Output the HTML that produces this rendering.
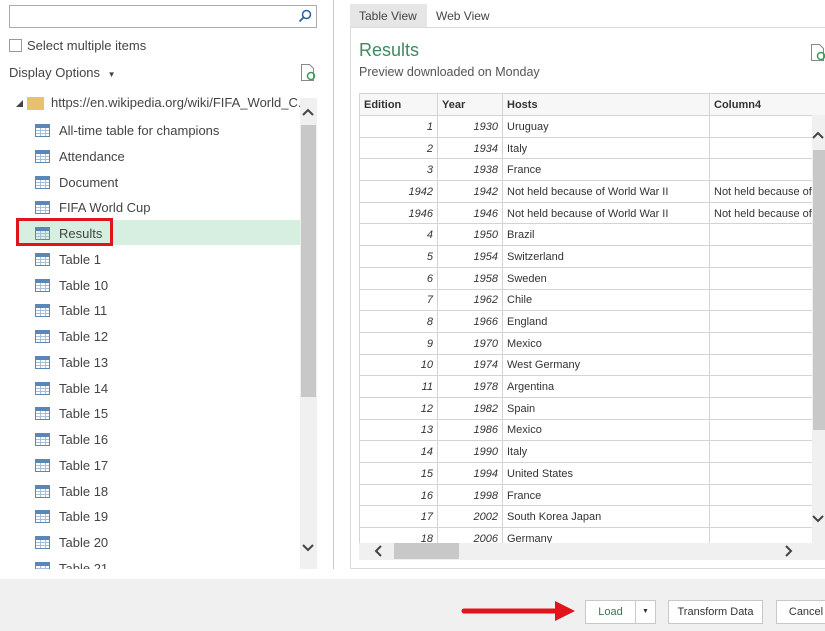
<!DOCTYPE html>
<html><head><style>
*{margin:0;padding:0;box-sizing:border-box}
body{width:825px;height:631px;overflow:hidden;background:#fff;font-family:"Liberation Sans",sans-serif;color:#444;position:relative}
.a{position:absolute}
.ic{position:absolute;width:15px;height:13px;border:1px solid #5a86b8;background:
linear-gradient(#5a86b8,#5a86b8) 0 0/100% 3px no-repeat,
repeating-linear-gradient(90deg,transparent 0 4px,#a9bfd8 4px 5px),
repeating-linear-gradient(0deg,transparent 0 2px,#a9bfd8 2px 3px);}
.it{position:absolute;left:59px;font-size:13px;color:#444}
table{border-collapse:collapse;font-size:11px;color:#333;table-layout:fixed}
td{border:1px solid #d4d4d4;height:21.7px;padding:1px 4px 0;white-space:nowrap;overflow:hidden}
td.n{text-align:right;font-style:italic}
th{border:1px solid #d4d4d4;height:22px;text-align:left;padding:0 4px;font-size:11px;background:#f7f7f7}
.btn{position:absolute;top:600px;height:24px;border:1px solid #c8c8c8;background:#fff;font-size:11px;color:#333;text-align:center;line-height:22px}
</style></head><body>
<div class="a" style="left:9px;top:5px;width:308px;height:23px;border:1px solid #ababab"></div>
<svg class="a" style="left:298px;top:9px" width="14" height="14"><circle cx="8.5" cy="5.5" r="4" fill="none" stroke="#2a5fa0" stroke-width="1.5"/><line x1="5.5" y1="8.5" x2="1.5" y2="12.5" stroke="#2a5fa0" stroke-width="1.8"/></svg>
<div class="a" style="left:9px;top:39px;width:13px;height:13px;border:1px solid #999"></div>
<div class="a" style="left:27px;top:38px;font-size:13px">Select multiple items</div>
<div class="a" style="left:9px;top:65px;font-size:13px">Display Options <span style="font-size:8px;margin-left:4px">▼</span></div>
<svg class="a" style="left:300px;top:64px" width="17" height="18"><path d="M1.5 .5h8l4 4v12h-12z" fill="#fff" stroke="#888"/><circle cx="11" cy="12" r="3.5" fill="none" stroke="#3a9a5a" stroke-width="1.5"/></svg>
<div class="a" style="left:16px;top:100px;width:0;height:0;border-left:7px solid transparent;border-bottom:7px solid #444"></div>
<div class="a" style="left:27px;top:97px;width:17px;height:13px;background:#e8c16e"></div>
<div class="a" style="left:51px;top:95px;font-size:13px">https://en.wikipedia.org/wiki/FIFA_World_C...</div>
<div class="a" style="left:16px;top:220px;width:284px;height:25px;background:#d6efe0"></div>
<div class="a" style="left:16px;top:218px;width:97px;height:28px;border:3px solid #e0141c"></div>
<div class="a" style="left:0;top:116px;width:300px;height:453px;overflow:hidden">
<div class="ic" style="left:35px;top:8px"></div><div class="it" style="top:7px">All-time table for champions</div>
<div class="ic" style="left:35px;top:34px"></div><div class="it" style="top:33px">Attendance</div>
<div class="ic" style="left:35px;top:60px"></div><div class="it" style="top:59px">Document</div>
<div class="ic" style="left:35px;top:85px"></div><div class="it" style="top:84px">FIFA World Cup</div>
<div class="ic" style="left:35px;top:111px"></div><div class="it" style="top:110px">Results</div>
<div class="ic" style="left:35px;top:137px"></div><div class="it" style="top:136px">Table 1</div>
<div class="ic" style="left:35px;top:163px"></div><div class="it" style="top:162px">Table 10</div>
<div class="ic" style="left:35px;top:188px"></div><div class="it" style="top:187px">Table 11</div>
<div class="ic" style="left:35px;top:214px"></div><div class="it" style="top:213px">Table 12</div>
<div class="ic" style="left:35px;top:240px"></div><div class="it" style="top:239px">Table 13</div>
<div class="ic" style="left:35px;top:266px"></div><div class="it" style="top:265px">Table 14</div>
<div class="ic" style="left:35px;top:291px"></div><div class="it" style="top:290px">Table 15</div>
<div class="ic" style="left:35px;top:317px"></div><div class="it" style="top:316px">Table 16</div>
<div class="ic" style="left:35px;top:343px"></div><div class="it" style="top:342px">Table 17</div>
<div class="ic" style="left:35px;top:369px"></div><div class="it" style="top:368px">Table 18</div>
<div class="ic" style="left:35px;top:394px"></div><div class="it" style="top:393px">Table 19</div>
<div class="ic" style="left:35px;top:420px"></div><div class="it" style="top:419px">Table 20</div>
<div class="ic" style="left:35px;top:446px"></div><div class="it" style="top:445px">Table 21</div>
</div>
<div class="a" style="left:300px;top:98px;width:17px;height:471px;background:#f0f0f0"></div>
<div class="a" style="left:301px;top:125px;width:15px;height:272px;background:#c8c8c8"></div>
<svg class="a" style="left:302px;top:108px" width="12" height="9"><path d="M1 7l5-5 5 5" fill="none" stroke="#444" stroke-width="2"/></svg>
<svg class="a" style="left:302px;top:543px" width="12" height="9"><path d="M1 2l5 5 5-5" fill="none" stroke="#444" stroke-width="2"/></svg>
<div class="a" style="left:333px;top:0;width:1px;height:569px;background:#c8c8c8"></div>
<div class="a" style="left:350px;top:4px;width:77px;height:23px;background:#e6e6e6"></div>
<div class="a" style="left:359px;top:9px;font-size:12px">Table View</div>
<div class="a" style="left:436px;top:9px;font-size:12px">Web View</div>
<div class="a" style="left:350px;top:27px;width:480px;height:542px;border:1px solid #dadada"></div>
<div class="a" style="left:359px;top:40px;font-size:18px;color:#3f8a5e">Results</div>
<div class="a" style="left:359px;top:65px;font-size:12.5px;color:#555">Preview downloaded on Monday</div>
<svg class="a" style="left:810px;top:44px" width="17" height="18"><path d="M1.5 .5h8l4 4v12h-12z" fill="#fff" stroke="#888"/><circle cx="11" cy="12" r="3.5" fill="none" stroke="#3a9a5a" stroke-width="1.5"/></svg>
<div class="a" style="left:359px;top:93px;width:466px;height:450px;overflow:hidden">
<table style="width:480px">
<colgroup><col style="width:78px"><col style="width:65px"><col style="width:207px"><col style="width:130px"></colgroup>
<tr><th>Edition</th><th>Year</th><th>Hosts</th><th>Column4</th></tr>
<tr><td class="n">1</td><td class="n">1930</td><td>Uruguay</td><td></td></tr>
<tr><td class="n">2</td><td class="n">1934</td><td>Italy</td><td></td></tr>
<tr><td class="n">3</td><td class="n">1938</td><td>France</td><td></td></tr>
<tr><td class="n">1942</td><td class="n">1942</td><td>Not held because of World War II</td><td>Not held because of</td></tr>
<tr><td class="n">1946</td><td class="n">1946</td><td>Not held because of World War II</td><td>Not held because of</td></tr>
<tr><td class="n">4</td><td class="n">1950</td><td>Brazil</td><td></td></tr>
<tr><td class="n">5</td><td class="n">1954</td><td>Switzerland</td><td></td></tr>
<tr><td class="n">6</td><td class="n">1958</td><td>Sweden</td><td></td></tr>
<tr><td class="n">7</td><td class="n">1962</td><td>Chile</td><td></td></tr>
<tr><td class="n">8</td><td class="n">1966</td><td>England</td><td></td></tr>
<tr><td class="n">9</td><td class="n">1970</td><td>Mexico</td><td></td></tr>
<tr><td class="n">10</td><td class="n">1974</td><td>West Germany</td><td></td></tr>
<tr><td class="n">11</td><td class="n">1978</td><td>Argentina</td><td></td></tr>
<tr><td class="n">12</td><td class="n">1982</td><td>Spain</td><td></td></tr>
<tr><td class="n">13</td><td class="n">1986</td><td>Mexico</td><td></td></tr>
<tr><td class="n">14</td><td class="n">1990</td><td>Italy</td><td></td></tr>
<tr><td class="n">15</td><td class="n">1994</td><td>United States</td><td></td></tr>
<tr><td class="n">16</td><td class="n">1998</td><td>France</td><td></td></tr>
<tr><td class="n">17</td><td class="n">2002</td><td>South Korea Japan</td><td></td></tr>
<tr><td class="n">18</td><td class="n">2006</td><td>Germany</td><td></td></tr>
</table></div>
<div class="a" style="left:812px;top:115px;width:13px;height:428px;background:#f0f0f0"></div>
<div class="a" style="left:813px;top:150px;width:12px;height:280px;background:#c8c8c8"></div>
<svg class="a" style="left:812px;top:131px" width="13" height="9"><path d="M1 7l5-5 5 5" fill="none" stroke="#444" stroke-width="2"/></svg>
<svg class="a" style="left:812px;top:514px" width="13" height="9"><path d="M1 2l5 5 5-5" fill="none" stroke="#444" stroke-width="2"/></svg>
<div class="a" style="left:359px;top:543px;width:466px;height:17px;background:#f0f0f0"></div>
<div class="a" style="left:394px;top:543px;width:65px;height:16px;background:#c8c8c8"></div>
<svg class="a" style="left:374px;top:545px" width="9" height="12"><path d="M7 1l-5 5 5 5" fill="none" stroke="#444" stroke-width="2"/></svg>
<svg class="a" style="left:784px;top:545px" width="9" height="12"><path d="M2 1l5 5-5 5" fill="none" stroke="#444" stroke-width="2"/></svg>
<div class="a" style="left:0;top:579px;width:825px;height:52px;background:#f0f0f0"></div>
<svg class="a" style="left:460px;top:600px" width="118" height="22"><line x1="4" y1="11" x2="98" y2="11" stroke="#e0141c" stroke-width="5" stroke-linecap="round"/><path d="M95 1l20 10-20 10z" fill="#e0141c"/></svg>
<div class="btn" style="left:585px;width:51px;color:#2e7d4f">Load</div>
<div class="btn" style="left:635px;width:21px;font-size:7px">▼</div>
<div class="btn" style="left:668px;width:95px">Transform Data</div>
<div class="btn" style="left:776px;width:60px">Cancel</div>
</body></html>
